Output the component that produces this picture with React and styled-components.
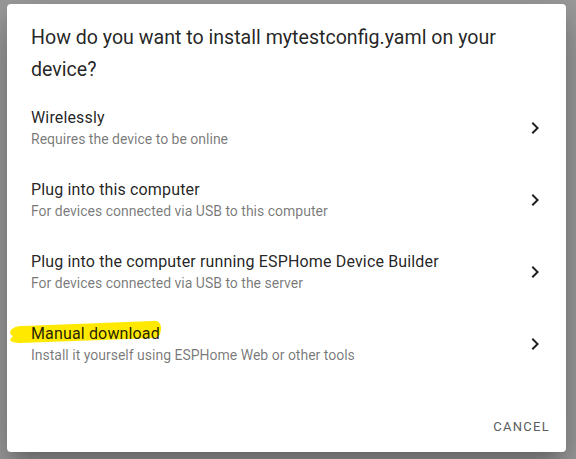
import React from "react";
import styled, { createGlobalStyle } from "styled-components";

const GlobalStyle = createGlobalStyle`
  html, body {
    margin: 0;
    padding: 0;
    background: #9c9c9c;
  }
  body {
    font-family: Roboto, "Noto Sans", "Liberation Sans", sans-serif;
    -webkit-font-smoothing: antialiased;
  }
`;

const Backdrop = styled.div`
  width: 576px;
  height: 459px;
  box-sizing: border-box;
  padding: 4px 10px 7px 7px;
  display: flex;
`;

const Dialog = styled.div`
  flex: 1;
  background: #ffffff;
  border-radius: 4px;
  box-shadow: 0 11px 15px -7px rgba(0, 0, 0, 0.2),
    0 24px 38px 3px rgba(0, 0, 0, 0.14), 0 9px 46px 8px rgba(0, 0, 0, 0.12);
  display: flex;
  flex-direction: column;
`;

const Title = styled.h2`
  margin: 0;
  padding: 18px 24px 6px 24px;
  font-size: 19.6px;
  font-weight: 400;
  line-height: 32px;
  letter-spacing: 0;
  color: rgba(0, 0, 0, 0.87);
`;

const List = styled.div`
  display: flex;
  flex-direction: column;
  padding-bottom: 20px;
`;

const Item = styled.div`
  position: relative;
  height: 72px;
  display: flex;
  align-items: center;
  padding: 0 19px 0 24px;
  cursor: pointer;
`;

const Texts = styled.div`
  position: relative;
  z-index: 1;
  flex: 1;
  display: flex;
  flex-direction: column;
`;

const Primary = styled.span`
  margin-top: 1px;
  font-size: 16px;
  line-height: 20px;
  height: 20px;
  letter-spacing: 0.009375em;
  color: rgba(0, 0, 0, 0.87);
`;

const Secondary = styled.span`
  margin-top: 1px;
  font-size: 14px;
  line-height: 20px;
  letter-spacing: 0;
  color: rgba(0, 0, 0, 0.54);
`;

const Chevron = styled.svg`
  width: 24px;
  height: 24px;
  fill: rgba(0, 0, 0, 0.87);
  flex-shrink: 0;
`;

const Marker = styled.svg`
  position: absolute;
  left: 0;
  top: 10px;
  width: 160px;
  height: 30px;
  z-index: 0;
`;

const Actions = styled.div`
  min-height: 52px;
  box-sizing: border-box;
  padding: 8px;
  display: flex;
  justify-content: flex-end;
  align-items: center;
`;

const TextButton = styled.button`
  height: 36px;
  padding: 0 8px;
  border: none;
  background: transparent;
  font-family: inherit;
  font-size: 13px;
  font-weight: 400;
  letter-spacing: 1.3px;
  text-transform: uppercase;
  color: #5c5c5c;
  cursor: pointer;
`;

const options = [
  { title: "Wirelessly", sub: "Requires the device to be online" },
  { title: "Plug into this computer", sub: "For devices connected via USB to this computer" },
  {
    title: "Plug into the computer running ESPHome Device Builder",
    sub: "For devices connected via USB to the server",
  },
  {
    title: "Manual download",
    sub: "Install it yourself using ESPHome Web or other tools",
    marked: true,
  },
];

const App = () => (
  <>
    <GlobalStyle />
    <Backdrop>
      <Dialog>
        <Title>How do you want to install mytestconfig.yaml on your device?</Title>
        <List>
          {options.map((o) => (
            <Item key={o.title}>
              {o.marked && (
                <Marker viewBox="0 0 160 30">
                  <path
                    d="M3 14 C5 9 10 8 16 8 L146 3 C151 2 154 5 154 10 C154 16 152 20 147 20 L14 25 C8 25 4 24 3 22 C4 20 5 19 6 18 C4 17 3 16 3 14 Z"
                    fill="#ffe900"
                  />
                </Marker>
              )}
              <Texts>
                <Primary>{o.title}</Primary>
                <Secondary>{o.sub}</Secondary>
              </Texts>
              <Chevron viewBox="0 0 24 24">
                <path d="M10 6 8.59 7.41 13.17 12l-4.58 4.59L10 18l6-6z" />
              </Chevron>
            </Item>
          ))}
        </List>
        <Actions>
          <TextButton>Cancel</TextButton>
        </Actions>
      </Dialog>
    </Backdrop>
  </>
);

export default App;
